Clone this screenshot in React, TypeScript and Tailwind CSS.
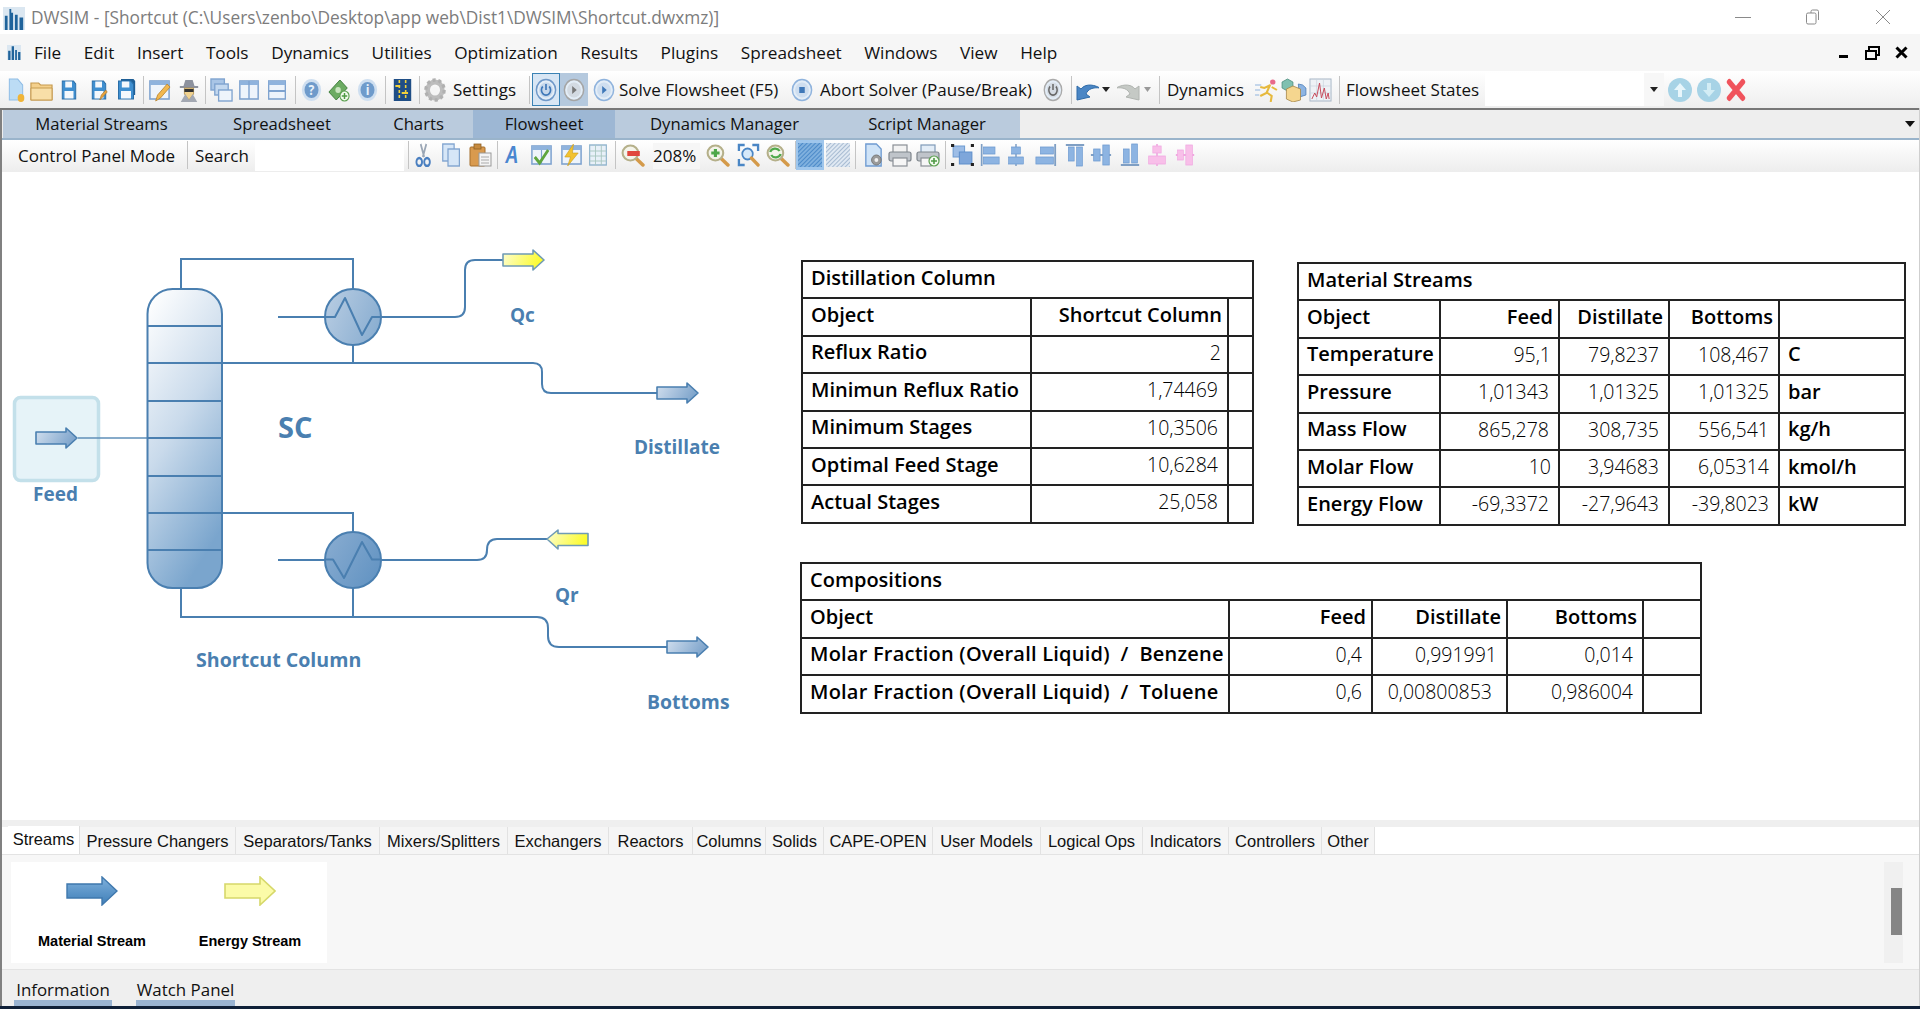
import React from "react";

const font = { fontFamily: '"Open Sans", "Noto Sans", sans-serif' };

function I({ w, h = 24, vb = "0 0 24 24", className = "", children }: { w: number; h?: number; vb?: string; className?: string; children: React.ReactNode }) {
  return (
    <svg width={w} height={h} viewBox={vb} preserveAspectRatio="none" className={"shrink-0 " + className}>
      {children}
    </svg>
  );
}

function Sep({ className = "" }: { className?: string }) {
  return <div className={"w-px h-[28px] bg-[#c4c4c4] shrink-0 " + className} />;
}

function T({ className = "", children }: { className?: string; children: React.ReactNode }) {
  return <div className={"shrink-0 whitespace-nowrap text-[17px] text-[#111] " + className}>{children}</div>;
}

const Ball = ({ c = "#7ea6cf", children }: { c?: string; children?: React.ReactNode }) => (
  <>
    <circle cx="12" cy="12" r="10.5" fill="#e3edf7" stroke={c} strokeWidth="1.6" />
    <circle cx="12" cy="12" r="7.5" fill={c} opacity="0.25" />
    {children}
  </>
);

const Win = ({ children }: { children?: React.ReactNode }) => (
  <>
    <rect x="2" y="3" width="20" height="18" fill="#eef4fb" stroke="#7fa3cf" strokeWidth="1.6" />
    <rect x="2" y="3" width="20" height="4" fill="#8fb3dd" />
    {children}
  </>
);

const Mag = ({ children }: { children?: React.ReactNode }) => (
  <>
    <line x1="15" y1="15" x2="22" y2="22" stroke="#d49a4a" strokeWidth="3.4" strokeLinecap="round" />
    <circle cx="10" cy="10" r="7.5" fill="#f4f4ea" stroke="#b5b08a" strokeWidth="2" />
    {children}
  </>
);

const Bar = ({ x, y, w, h, c = "#8db4e2" }: { x: number; y: number; w: number; h: number; c?: string }) => (
  <rect x={x} y={y} width={w} height={h} fill={c} stroke={c === "#8db4e2" ? "#6f9bd1" : "#f0a8e0"} strokeWidth="0.8" />
);

const Floppy = ({ pen }: { pen?: boolean }) => (
  <>
    <path d="M3 3h15l3 3v15H3z" fill="#3f8fd0" stroke="#2a6ea8" strokeWidth="1.2" />
    <rect x="7" y="3.5" width="9" height="6" fill="#f4f8fc" />
    <rect x="6" y="13" width="12" height="7.5" fill="#f4f8fc" />
    {pen && <path d="M13 22l2-5 6-5 2 2-6 5z" fill="#e8a33d" stroke="#9c6a20" strokeWidth="0.6" />}
  </>
);

function Row1() {
  return (
    <div className="flex items-center h-[37px] bg-gradient-to-b from-[#ffffff] to-[#eeeeee]">
      <I w={20} className="ml-[6px]">
        <path d="M4 1h10l6 6v15H4z" fill="#bcdcf5" stroke="#8fbde6" strokeWidth="1.2" />
        <circle cx="18" cy="20" r="4" fill="#f0b437" />
      </I>
      <I w={23} className="ml-[4px]">
        <path d="M1 5h8l2 2h12v15H1z" fill="#f4d08c" stroke="#c69a4f" strokeWidth="1.2" />
        <path d="M1 10h22v12H1z" fill="#f8dfa8" stroke="#c69a4f" strokeWidth="1" />
      </I>
      <I w={18} className="ml-[7px]"><Floppy /></I>
      <I w={18} className="ml-[12px]"><Floppy pen /></I>
      <I w={20} className="ml-[8px]">
        <path d="M6 1h15l2 2v14H6z" fill="#1f5f96" />
        <Floppy />
      </I>
      <Sep className="ml-[7px]" />
      <I w={23} className="ml-[4px]">
        <Win />
        <path d="M8 23l2-6 10-11 3 3-10 11z" fill="#f2b84f" stroke="#b5802c" strokeWidth="0.8" />
      </I>
      <I w={22} className="ml-[7px]">
        <path d="M6 8l2-6h8l2 6h4v2H2V8z" fill="#8d929e" />
        <path d="M7 10h10v6l-5 6-5-6z" fill="#f1d28f" stroke="#a88742" strokeWidth="0.8" />
        <rect x="7" y="11" width="10" height="3" fill="#333" />
        <path d="M3 24l5-8 4 6 4-6 5 8z" fill="#a3a8b2" />
      </I>
      <Sep className="ml-[5px]" />
      <I w={23} className="ml-[4px]">
        <rect x="1" y="1" width="14" height="11" fill="#a9c5e6" stroke="#7fa3cf" strokeWidth="1.4" />
        <rect x="5" y="6" width="14" height="11" fill="#c3d8ef" stroke="#7fa3cf" strokeWidth="1.4" />
        <rect x="9" y="12" width="14" height="11" fill="#eef4fb" stroke="#7fa3cf" strokeWidth="1.4" />
      </I>
      <I w={22} className="ml-[5px]">
        <Win />
        <line x1="12" y1="3" x2="12" y2="21" stroke="#7fa3cf" strokeWidth="1.6" />
      </I>
      <I w={20} className="ml-[7px]">
        <Win />
        <line x1="2" y1="13" x2="22" y2="13" stroke="#7fa3cf" strokeWidth="2" />
      </I>
      <Sep className="ml-[8px]" />
      <I w={21} className="ml-[5px]">
        <circle cx="12" cy="12" r="11" fill="#cfdff0" />
        <circle cx="12" cy="12" r="8" fill="#6f9bcb" />
        <text x="12" y="17" textAnchor="middle" fontSize="14" fontWeight="700" fill="#e8f1fa">?</text>
      </I>
      <I w={22} className="ml-[6px]">
        <path d="M1 14L13 2l8 8-12 12z" fill="#6cab62" stroke="#3f7d3c" strokeWidth="1" />
        <circle cx="11" cy="12" r="3" fill="#c9e4bf" />
        <circle cx="18" cy="18" r="5" fill="#f3fbef" stroke="#5ba04f" strokeWidth="1.2" />
        <path d="M18 15v6M15 18h6" stroke="#4f9a45" strokeWidth="1.6" />
      </I>
      <I w={21} className="ml-[7px]">
        <circle cx="12" cy="12" r="11" fill="#cfdff0" />
        <circle cx="12" cy="12" r="8" fill="#6f9bcb" />
        <text x="12" y="17" textAnchor="middle" fontSize="14" fontWeight="700" fill="#e8f1fa">i</text>
      </I>
      <Sep className="ml-[7px]" />
      <I w={19} className="ml-[7px]">
        <rect x="1" y="1" width="22" height="22" fill="#1f4e86" />
        <path d="M8 2v20M16 2v20" stroke="#f2d23c" strokeWidth="2" strokeDasharray="3 2" />
        <path d="M3 8h6M11 15h8" stroke="#f2d23c" strokeWidth="2" />
      </I>
      <Sep className="ml-[7px]" />
      <I w={22} className="ml-[4px]">
        <circle cx="12" cy="12" r="8" fill="none" stroke="#bdbdbd" strokeWidth="5" />
        <circle cx="12" cy="12" r="10" fill="none" stroke="#b0b0b0" strokeWidth="3.5" strokeDasharray="3.4 2.9" />
        <circle cx="12" cy="12" r="3" fill="#f5f5f5" />
      </I>
      <T className="ml-[7px] w-[66px]">Settings</T>
      <Sep className="ml-[10px]" />
      <div className="ml-[2px] w-[28px] h-[33px] shrink-0 flex items-center justify-center bg-[#d8e6f4] border border-[#3b82b4]">
        <I w={22}>
          <Ball c="#6f98c8">
            <path d="M8.5 8.5a5 5 0 1 0 7 0M12 6v6" fill="none" stroke="#3f78b8" strokeWidth="1.8" />
          </Ball>
        </I>
      </div>
      <div className="w-[28px] h-[33px] shrink-0 flex items-center justify-center bg-[#b5c9de]">
        <I w={22}>
          <Ball c="#a5a5a5"><path d="M10 8l5 4-5 4z" fill="#777" /></Ball>
        </I>
      </div>
      <div className="ml-[2px] w-[28px] shrink-0 flex items-center justify-center">
        <I w={22}>
          <Ball c="#8fb3dd"><path d="M10 8l5 4-5 4z" fill="#3f78b8" /></Ball>
        </I>
      </div>
      <T className="ml-[1px] w-[162px]">Solve Flowsheet (F5)</T>
      <I w={22} className="ml-[10px]">
        <Ball c="#8fb3dd"><rect x="9" y="9" width="6" height="6" fill="#3f78b8" /></Ball>
      </I>
      <T className="ml-[7px] w-[212px]">Abort Solver (Pause/Break)</T>
      <I w={20} className="ml-[11px]">
        <Ball c="#aaaaaa">
          <path d="M8.5 8.5a5 5 0 1 0 7 0M12 6v6" fill="none" stroke="#666" strokeWidth="1.8" />
        </Ball>
      </I>
      <Sep className="ml-[8px]" />
      <I w={24} className="ml-[3px]">
        <path d="M2 22V8l4 3c3-4 10-6 19-1-7-1-12 1-14 6l4 3z" fill="#4a86c5" stroke="#2f6ba8" strokeWidth="1" />
      </I>
      <I w={8} h={5} vb="0 0 8 5" className="ml-[3px]"><path d="M0 0h8L4 5z" fill="#222" /></I>
      <I w={24} className="ml-[7px]">
        <path d="M22 22V8l-4 3C15 7 8 5-1 10c7-1 12 1 14 6l-4 3z" fill="#c5c9c5" stroke="#b0b4b0" strokeWidth="1" />
      </I>
      <I w={7} h={5} vb="0 0 8 5" className="ml-[3px]"><path d="M0 0h8L4 5z" fill="#999" /></I>
      <Sep className="ml-[8px]" />
      <T className="ml-[7px] w-[78px]">Dynamics</T>
      <I w={25} className="ml-[9px]">
        <circle cx="18" cy="4" r="2.6" fill="#e86a8a" />
        <path d="M16 7l-6 3-4-1M15 8l-3 7-6 3M13 15l4 3-1 6M17 9l5 3" fill="none" stroke="#e6b93d" strokeWidth="2" />
        <path d="M1 7h6M1 12h5M1 17h4" stroke="#8fb3dd" strokeWidth="1.2" />
      </I>
      <I w={26} className="ml-[2px]">
        <path d="M1 4l5-3 5 3v6l-5 3-5-3z" fill="#7fc0b0" stroke="#4e8f80" strokeWidth="0.8" />
        <path d="M16 6l4 1 3 3v7l-6 2z" fill="#8db4e2" stroke="#4f7fb8" strokeWidth="0.8" />
        <path d="M5 11l6-3 7 3v11l-7 2-6-3z" fill="#f5d68f" stroke="#a8894a" strokeWidth="0.8" />
      </I>
      <I w={23} className="ml-[2px]">
        <rect x="1" y="1" width="22" height="22" fill="#eef2f6" stroke="#a8b6c6" strokeWidth="1" />
        <path d="M1 8h22M1 15h22M8 1v22M15 1v22" stroke="#c9d3de" strokeWidth="0.7" />
        <path d="M3 21l3-6 2 4 3-14 2 15 3-10 2 11 2-6 1 6" fill="none" stroke="#c74a5a" strokeWidth="1" />
      </I>
      <Sep className="ml-[7px]" />
      <T className="ml-[6px] w-[132px]">Flowsheet States</T>
      <div className="ml-[7px] w-[159px] h-[33px] bg-white shrink-0" />
      <div className="w-[20px] h-[33px] bg-[#f7f7f7] shrink-0 flex items-center justify-center">
        <I w={8} h={5} vb="0 0 8 5"><path d="M0 0h8L4 5z" fill="#222" /></I>
      </div>
      <I w={24} className="ml-[4px]">
        <circle cx="12" cy="12" r="12" fill="#a7d3e6" />
        <path d="M12 5l6 7h-4v7h-4v-7H6z" fill="#e8f6fb" />
      </I>
      <I w={24} className="ml-[5px]">
        <circle cx="12" cy="12" r="12" fill="#a7d3e6" />
        <path d="M12 19l6-7h-4V5h-4v7H6z" fill="#d3edf5" />
      </I>
      <I w={20} className="ml-[5px]">
        <path d="M4 4l16 16M20 4L4 20" stroke="#f0535c" strokeWidth="6" strokeLinecap="round" />
      </I>
    </div>
  );
}

function Row2() {
  return (
    <div className="flex items-center h-[32px] pb-[2px] bg-gradient-to-b from-[#ffffff] to-[#ededed]">
      <T className="ml-[18px] mt-[2px] w-[160px]">Control Panel Mode</T>
      <Sep className="ml-[9px]" />
      <T className="ml-[7px] mt-[2px] w-[55px]">Search</T>
      <div className="ml-[5px] mt-[2px] w-[149px] h-[30px] bg-white shrink-0" />
      <Sep className="ml-[4px]" />
      <I w={17} className="ml-[6px]">
        <path d="M8 1l5 13M16 1l-5 13" stroke="#9aa6b5" strokeWidth="2.4" />
        <circle cx="6" cy="19" r="4" fill="none" stroke="#4a7fc0" strokeWidth="2.6" />
        <circle cx="17" cy="19" r="4" fill="none" stroke="#4a7fc0" strokeWidth="2.6" />
      </I>
      <I w={21} className="ml-[9px]">
        <rect x="2" y="1" width="13" height="17" fill="#d6e6f7" stroke="#7fa3cf" strokeWidth="1.4" />
        <rect x="8" y="6" width="13" height="17" fill="#d6e6f7" stroke="#7fa3cf" strokeWidth="1.4" />
      </I>
      <I w={24} className="ml-[6px]">
        <rect x="2" y="4" width="15" height="19" rx="1" fill="#d99a4e" stroke="#a56f2c" strokeWidth="1" />
        <rect x="6" y="1" width="7" height="5" fill="#c68a3f" stroke="#8d5f25" strokeWidth="0.8" />
        <rect x="11" y="10" width="12" height="13" fill="#f4f4f4" stroke="#9a9a9a" strokeWidth="1" />
        <path d="M13 14h8M13 17h8M13 20h8" stroke="#aaa" strokeWidth="1" />
      </I>
      <Sep className="ml-[5px]" />
      <I w={19} className="ml-[5px] overflow-visible">
        <text x="11" y="20" textAnchor="middle" fontSize="23" fontWeight="700" fontStyle="italic" fontFamily="Liberation Sans, sans-serif" fill="#4a86d0">A</text>
      </I>
      <I w={23} className="ml-[8px]">
        <Win>
          <path d="M12 7v14" stroke="#7fa3cf" strokeWidth="1.2" />
        </Win>
        <path d="M5 14l5 6 9-13" fill="none" stroke="#5ea53e" strokeWidth="3" />
      </I>
      <I w={23} className="ml-[7px]">
        <Win />
        <path d="M14 1L5 14h6l-3 9 11-13h-6z" fill="#f2c230" stroke="#c99a1a" strokeWidth="0.6" />
      </I>
      <I w={20} className="ml-[5px]">
        <rect x="2" y="2" width="20" height="20" fill="#e8f0f8" stroke="#8fb3cc" strokeWidth="1.4" />
        <path d="M2 8h20M2 13h20M2 18h20M9 2v20M16 2v20" stroke="#a9c6c0" strokeWidth="1" />
      </I>
      <Sep className="ml-[7px]" />
      <I w={25} className="ml-[4px]">
        <Mag><rect x="7" y="8" width="12" height="5" fill="#e0463c" /></Mag>
      </I>
      <T className="ml-[8px] mt-[2px] w-[47px] bg-[#f6f6f6]">208%</T>
      <I w={25} className="ml-[5px]">
        <Mag><path d="M6 10h8M10 6v8" stroke="#4fa84a" strokeWidth="3" /></Mag>
      </I>
      <I w={23} className="ml-[7px]">
        <path d="M2 8V2h6M16 2h6v6M2 16v6h6" fill="none" stroke="#4a86c5" strokeWidth="2.4" />
        <circle cx="11" cy="11" r="5.5" fill="#d6e9fa" stroke="#4a86c5" strokeWidth="1.8" />
        <line x1="15" y1="15" x2="22" y2="22" stroke="#d49a4a" strokeWidth="3.4" strokeLinecap="round" />
      </I>
      <I w={25} className="ml-[5px]">
        <Mag><path d="M5 9a5 5 0 0 1 9-1M15 11a5 5 0 0 1-9 1" fill="none" stroke="#4fa84a" strokeWidth="2.2" /></Mag>
      </I>
      <Sep className="ml-[5px]" />
      <div className="w-[28px] h-[30px] shrink-0 flex items-center justify-center bg-[#9fc6ec]">
        <I w={24} h={24}>
          <defs>
            <pattern id="h1" width="3" height="3" patternUnits="userSpaceOnUse" patternTransform="rotate(45)">
              <rect width="3" height="3" fill="#7fb0de" />
              <line x1="0" y1="0" x2="0" y2="3" stroke="#3f80c4" strokeWidth="1.6" />
            </pattern>
            <pattern id="h2" width="3" height="3" patternUnits="userSpaceOnUse" patternTransform="rotate(45)">
              <rect width="3" height="3" fill="#dfe8f2" />
              <line x1="0" y1="0" x2="0" y2="3" stroke="#8fa8c4" strokeWidth="1.4" />
            </pattern>
          </defs>
          <rect width="24" height="24" fill="url(#h1)" />
        </I>
      </div>
      <I w={24} className="ml-[2px]"><rect width="24" height="24" fill="url(#h2)" /></I>
      <Sep className="ml-[5px]" />
      <I w={23} className="ml-[6px]">
        <path d="M4 1h11l5 5v17H4z" fill="#cfe3f7" stroke="#6f9bd1" strokeWidth="1.4" />
        <circle cx="15" cy="17" r="5" fill="#9a9a9a" stroke="#777" strokeWidth="1" />
        <circle cx="15" cy="17" r="2" fill="#eee" />
      </I>
      <I w={24} className="ml-[3px]">
        <rect x="5" y="2" width="14" height="8" fill="#f3f3f3" stroke="#8a8f96" strokeWidth="1.2" />
        <rect x="1" y="9" width="22" height="9" rx="2" fill="#bfc4ca" stroke="#7f858c" strokeWidth="1.2" />
        <rect x="5" y="15" width="14" height="8" fill="#f6f6f6" stroke="#8a8f96" strokeWidth="1.2" />
      </I>
      <I w={24} className="ml-[4px]">
        <rect x="5" y="2" width="14" height="8" fill="#e3edf7" stroke="#7f9ab8" strokeWidth="1.2" />
        <rect x="1" y="9" width="22" height="9" rx="2" fill="#bfc4ca" stroke="#7f858c" strokeWidth="1.2" />
        <rect x="5" y="15" width="10" height="8" fill="#f6f6f6" stroke="#8a8f96" strokeWidth="1.2" />
        <circle cx="18" cy="18" r="5" fill="#f3fbef" stroke="#5ba04f" strokeWidth="1.2" />
        <path d="M18 15v6M15 18h6" stroke="#4f9a45" strokeWidth="1.6" />
      </I>
      <Sep className="ml-[5px]" />
      <I w={25} className="ml-[4px]">
        <rect x="3" y="3" width="11" height="11" fill="#9dbde6" stroke="#6f9bd1" strokeWidth="1" />
        <rect x="9" y="9" width="12" height="12" fill="#7ea6da" stroke="#5f8fcb" strokeWidth="1" />
        <path d="M1 1h3v3H1zM20 1h3v3h-3zM1 20h3v3H1zM20 20h3v3h-3z" fill="#222" />
      </I>
      <I w={20} className="ml-[5px]">
        <path d="M2 1v22" stroke="#7f9fc4" strokeWidth="2" />
        <Bar x={4} y={4} w={14} h={7} />
        <Bar x={4} y={14} w={19} h={7} />
      </I>
      <I w={18} className="ml-[7px]">
        <path d="M12 1v22" stroke="#7f9fc4" strokeWidth="2" />
        <Bar x={6} y={4} w={12} h={7} />
        <Bar x={2} y={14} w={20} h={7} />
      </I>
      <I w={22} className="ml-[10px]">
        <path d="M22 1v22" stroke="#7f9fc4" strokeWidth="2" />
        <Bar x={6} y={4} w={14} h={7} />
        <Bar x={1} y={14} w={19} h={7} />
      </I>
      <I w={20} className="ml-[8px]">
        <path d="M1 2h22" stroke="#7f9fc4" strokeWidth="2" />
        <Bar x={4} y={4} w={7} h={14} />
        <Bar x={14} y={4} w={7} h={19} />
      </I>
      <I w={22} className="ml-[5px]">
        <path d="M1 12h22" stroke="#7f9fc4" strokeWidth="2" />
        <Bar x={4} y={6} w={7} h={12} />
        <Bar x={14} y={2} w={7} h={20} />
      </I>
      <I w={20} className="ml-[8px]">
        <path d="M1 22h22" stroke="#7f9fc4" strokeWidth="2" />
        <Bar x={4} y={6} w={7} h={14} />
        <Bar x={14} y={1} w={7} h={19} />
      </I>
      <I w={20} className="ml-[7px]">
        <path d="M12 1v22" stroke="#f0a8e0" strokeWidth="2" />
        <Bar x={7} y={3} w={10} h={7} c="#f8bfe9" />
        <Bar x={2} y={13} w={20} h={8} c="#f8bfe9" />
      </I>
      <I w={20} className="ml-[8px]">
        <path d="M1 12h22" stroke="#f0a8e0" strokeWidth="2" />
        <Bar x={3} y={7} w={7} h={10} c="#f8bfe9" />
        <Bar x={13} y={2} w={8} h={20} c="#f8bfe9" />
      </I>
    </div>
  );
}

function Arrow({ x, y, kind, left }: { x: number; y: number; kind: "m" | "e"; left?: boolean }) {
  const d = left
    ? `M${x} ${y}l11 -9v3.5h30v12h-30v3.5z`
    : `M${x} ${y - 6}h30v-4l11 10l-11 10v-4h-30z`;
  return <path d={d} fill={kind === "m" ? "url(#gm)" : "url(#ge)"} stroke={kind === "m" ? "#4a7fb0" : "#6f9bb5"} strokeWidth="1.6" strokeLinejoin="round" />;
}

function Diagram() {
  const s = "#4a7fb0";
  const labelCls = { fontFamily: '"Open Sans", sans-serif', fontWeight: 700, fill: "#4a7fb0" } as const;
  const stages = [326, 363, 401, 438, 476, 513, 550];
  return (
    <svg width={760} height={560} viewBox="0 172 760 560" className="absolute left-0 top-0">
      <defs>
        <linearGradient id="gc" x1="0.1" y1="0" x2="0.5" y2="1">
          <stop offset="0" stopColor="#ffffff" />
          <stop offset="0.5" stopColor="#c9daeb" />
          <stop offset="1" stopColor="#7aa5cd" />
        </linearGradient>
        <linearGradient id="ga" x1="0" y1="0.2" x2="1" y2="0.6">
          <stop offset="0" stopColor="#b7cce2" />
          <stop offset="1" stopColor="#8aaed1" />
        </linearGradient>
        <linearGradient id="gb" x1="0" y1="0.2" x2="1" y2="0.8">
          <stop offset="0" stopColor="#87abd0" />
          <stop offset="1" stopColor="#6293c2" />
        </linearGradient>
        <linearGradient id="gm" x1="0" y1="0" x2="1" y2="0.3">
          <stop offset="0" stopColor="#d3e0ef" />
          <stop offset="1" stopColor="#7fa5cc" />
        </linearGradient>
        <linearGradient id="ge" x1="0" y1="0" x2="1" y2="0.2">
          <stop offset="0" stopColor="#fdfdd0" />
          <stop offset="1" stopColor="#fbfb2e" />
        </linearGradient>
      </defs>
      <rect x="14.5" y="397.5" width="84" height="83" rx="6" fill="#e6f3f8" stroke="#c3e0ea" strokeWidth="3.5" />
      <g fill="none" stroke={s} strokeWidth="2">
        <path d="M181 289V259H353V289" />
        <path d="M353 345V363M222 363H533Q542 363 542 372V384Q542 393 551 393H657" />
        <path d="M278 317H325M381 317H455Q465 317 465 307V270Q465 260 475 260H503" />
        <path d="M222 513H353V532M278 560H325M381 560H477Q487 560 487 550Q487 539 497 539H547" />
        <path d="M353 588V617M181 588V617H537Q548 617 548 628V636Q548 647 559 647H667" />
      </g>
      <path d="M78 438H147" stroke="#5f8fb8" strokeWidth="1.6" />
      <rect x="147.5" y="289" width="74.5" height="299" rx="25" fill="url(#gc)" stroke={s} strokeWidth="2" />
      {stages.map((y) => (
        <line key={y} x1="147.5" y1={y} x2="222" y2={y} stroke={s} strokeWidth="1.8" />
      ))}
      <circle cx="353" cy="317" r="28" fill="url(#ga)" stroke={s} strokeWidth="2" />
      <path d="M325 317H335L345 298L362 335L372 317H381" fill="none" stroke={s} strokeWidth="2" strokeLinejoin="round" />
      <circle cx="353" cy="560" r="28" fill="url(#gb)" stroke={s} strokeWidth="2" />
      <path d="M325 559.5H333L344 578L362 542L372 559.5H381" fill="none" stroke={s} strokeWidth="2" strokeLinejoin="round" />
      <Arrow x={36} y={438} kind="m" />
      <Arrow x={503} y={260} kind="e" />
      <Arrow x={657} y={393} kind="m" />
      <Arrow x={547} y={539} kind="e" left />
      <Arrow x={667} y={647} kind="m" />
      <g style={labelCls}>
        <text x="33" y="501" fontSize="19">Feed</text>
        <text x="278" y="438" fontSize="29">SC</text>
        <text x="510" y="322" fontSize="19">Qc</text>
        <text x="634" y="454" fontSize="19">Distillate</text>
        <text x="555" y="602" fontSize="19">Qr</text>
        <text x="196" y="667" fontSize="19.6">Shortcut Column</text>
        <text x="647" y="709" fontSize="19.4">Bottoms</text>
      </g>
    </svg>
  );
}

type Cell = { t: string; pr?: string; bold?: boolean; left?: boolean };

function DataTable({ className, title, cols, rows }: { className: string; title: string; cols: number[]; rows: Cell[][] }) {
  return (
    <table className={"absolute table-fixed border-collapse bg-white text-black text-[20px] leading-none " + className}>
      <colgroup>
        {cols.map((c, i) => (
          <col key={i} style={{ width: c }} />
        ))}
      </colgroup>
      <tbody>
        <tr className="h-[37.4px]">
          <td colSpan={cols.length} className="border-2 border-[#222] px-[8px] pt-0 pb-[3px] font-semibold whitespace-nowrap">
            {title}
          </td>
        </tr>
        {rows.map((r, i) => (
          <tr key={i} className="h-[37.4px]">
            {r.map((c, j) => (
              <td
                key={j}
                className={
                  "border-2 border-[#222] pt-0 pb-[4px] whitespace-pre overflow-hidden " +
                  (c.left ? "text-left pl-[8px] pr-0 " : "text-right pl-0 ") +
                  (c.bold ? "font-semibold " : "font-light text-[19.5px] ") +
                  (c.pr ?? "")
                }
              >
                {c.t}
              </td>
            ))}
          </tr>
        ))}
      </tbody>
    </table>
  );
}

const L = (t: string): Cell => ({ t, left: true, bold: true });
const LW = (t: string): Cell => ({ t, left: true, bold: true, pr: "tracking-[0.22px]" });
const H = (t: string): Cell => ({ t, bold: true, pr: "pr-[5px]" });
const N = (t: string): Cell => ({ t, pr: "pr-[9px]" });
const E: Cell = { t: "", left: true };

const Tabs = [
  ["w-[197px]", "Material Streams", false],
  ["w-[164px]", "Spreadsheet", false],
  ["w-[109px]", "Charts", false],
  ["w-[142px]", "Flowsheet", true],
  ["w-[219px]", "Dynamics Manager", false],
  ["w-[186px]", "Script Manager", false],
] as const;

const Palette: [string, string][] = [
  ["Pressure Changers", "w-[156px]"],
  ["Separators/Tanks", "w-[144px]"],
  ["Mixers/Splitters", "w-[128px]"],
  ["Exchangers", "w-[101px]"],
  ["Reactors", "w-[84px]"],
  ["Columns", "w-[73px]"],
  ["Solids", "w-[58px]"],
  ["CAPE-OPEN", "w-[109px]"],
  ["User Models", "w-[108px]"],
  ["Logical Ops", "w-[102px]"],
  ["Indicators", "w-[86px]"],
  ["Controllers", "w-[93px]"],
  ["Other", "w-[53px]"],
];

const arial = { fontFamily: '"Liberation Sans", Arial, sans-serif' };

export default function App() {
  return (
    <div style={font} className="relative w-[1920px] h-[1009px] overflow-hidden bg-white flex flex-col">
      {/* Title bar */}
      <div className="h-[34px] shrink-0 flex items-center bg-white">
        <I w={22} h={23} className="ml-[3px] mt-[2px]">
          <rect x="0" y="0" width="24" height="24" fill="#dbe7f1" />
          <path d="M2 24V9h3v15zM7 24V2h2v4h2v18zM13 24V8h3v16zM18 24V11h4v13z" fill="#1f639b" />
        </I>
        <div className="ml-[6px] mt-[2px] text-[17.3px] text-[#7c7c7c] whitespace-nowrap">
          DWSIM - [Shortcut (C:\Users\zenbo\Desktop\app web\Dist1\DWSIM\Shortcut.dwxmz)]
        </div>
        <div className="ml-auto flex items-center">
          <div className="w-[16px] h-px bg-[#8a8a8a]" />
          <I w={16} h={16} vb="0 0 16 16" className="ml-[54px]">
            <rect x="1.5" y="4" width="9.5" height="11" rx="1.5" fill="none" stroke="#8a8a8a" strokeWidth="1" />
            <path d="M4 4V2.5A1.5 1.5 0 0 1 5.5 1H10a1.5 1.5 0 0 1 1.5 1.5V11" fill="none" stroke="#8a8a8a" strokeWidth="1" transform="translate(2 0)" />
          </I>
          <I w={16} h={16} vb="0 0 16 16" className="ml-[54px] mr-[29px]">
            <path d="M1 1l14 14M15 1L1 15" stroke="#8a8a8a" strokeWidth="1" />
          </I>
        </div>
      </div>

      {/* Menu bar */}
      <div className="h-[37px] shrink-0 flex items-center bg-[#f6f6f6]">
        <I w={14} h={15} className="ml-[7px]">
          <rect x="0" y="0" width="24" height="24" fill="#dbe7f1" />
          <path d="M2 24V9h4v15zM8 24V2h4v22zM14 24V8h3v16zM19 24V11h4v13z" fill="#1f639b" />
        </I>
        <div className="ml-[13px] flex items-center gap-[22.6px] text-[17.2px] text-[#111]">
          {["File", "Edit", "Insert", "Tools", "Dynamics", "Utilities", "Optimization", "Results", "Plugins", "Spreadsheet", "Windows", "View", "Help"].map((m) => (
            <span key={m} className="whitespace-nowrap">{m}</span>
          ))}
        </div>
        <div className="ml-auto flex items-center">
          <div className="w-[9px] h-[3px] mt-[8px] bg-black" />
          <I w={15} h={14} vb="0 0 15 14" className="ml-[17px]">
            <rect x="4" y="1" width="10" height="8" fill="none" stroke="#000" strokeWidth="2" />
            <rect x="1" y="5" width="10" height="8" fill="#f6f6f6" stroke="#000" strokeWidth="2" />
          </I>
          <I w={13} h={13} vb="0 0 13 13" className="ml-[15px] mr-[12px]">
            <path d="M1.5 1.5l10 10M11.5 1.5l-10 10" stroke="#000" strokeWidth="3" />
          </I>
        </div>
      </div>

      <div className="shrink-0"><Row1 /></div>
      <div className="h-[2px] shrink-0 bg-[#777777]" />

      {/* Document tabs */}
      <div className="h-[28px] shrink-0 flex items-stretch pl-[3px] bg-[#eeeeee]">
        {Tabs.map(([w, label, active]) => (
          <div key={label} className={w + " flex items-center justify-center text-[16.7px] text-[#111] whitespace-nowrap " + (active ? "bg-[#9db7d4]" : "bg-[#bacbdd]")}>
            {label}
          </div>
        ))}
        <I w={10} h={6} vb="0 0 10 6" className="ml-auto mr-[5px] self-center">
          <path d="M0 0h10L5 6z" fill="#111" />
        </I>
      </div>
      <div className="h-[2px] shrink-0 bg-[#9ab4cb]" />
      <div className="shrink-0"><Row2 /></div>

      {/* Canvas */}
      <div className="relative h-[648px] shrink-0 bg-white">
        <Diagram />
        <DataTable
          className="left-[801px] top-[88px] w-[451px]"
          title="Distillation Column"
          cols={[229, 197, 25]}
          rows={[
            [L("Object"), H("Shortcut Column"), E],
            [L("Reflux Ratio"), { t: "2", pr: "pr-[6px]" }, E],
            [L("Minimun Reflux Ratio"), N("1,74469"), E],
            [L("Minimum Stages"), N("10,3506"), E],
            [L("Optimal Feed Stage"), N("10,6284"), E],
            [L("Actual Stages"), N("25,058"), E],
          ]}
        />
        <DataTable
          className="left-[1297px] top-[90px] w-[607px]"
          title="Material Streams"
          cols={[142, 119, 110, 110, 126]}
          rows={[
            [L("Object"), H("Feed"), H("Distillate"), H("Bottoms"), E],
            [L("Temperature"), { t: "95,1", pr: "pr-[7px]" }, N("79,8237"), N("108,467"), L("C")],
            [L("Pressure"), N("1,01343"), N("1,01325"), N("1,01325"), L("bar")],
            [L("Mass Flow"), N("865,278"), N("308,735"), N("556,541"), L("kg/h")],
            [L("Molar Flow"), { t: "10", pr: "pr-[7px]" }, N("3,94683"), N("6,05314"), L("kmol/h")],
            [L("Energy Flow"), N("-69,3372"), N("-27,9643"), N("-39,8023"), L("kW")],
          ]}
        />
        <DataTable
          className="left-[800px] top-[390px] w-[900px]"
          title="Compositions"
          cols={[428, 143, 135, 136, 58]}
          rows={[
            [L("Object"), H("Feed"), H("Distillate"), H("Bottoms"), E],
            [LW("Molar Fraction (Overall Liquid)  /  Benzene"), N("0,4"), N("0,991991"), N("0,014"), E],
            [LW("Molar Fraction (Overall Liquid)  /  Toluene"), N("0,6"), { t: "0,00800853", pr: "pr-[14px]" }, N("0,986004"), E],
          ]}
        />
      </div>

      {/* Palette */}
      <div className="h-[7px] shrink-0 bg-[#efefef]" />
      <div style={arial} className="h-[27px] shrink-0 flex items-stretch pl-[8px] text-[16.5px] text-[#111] bg-white">
        <div className="w-[72px] -mt-[1px] pb-[2px] flex items-center justify-center border-r border-[#dddddd] bg-white">Streams</div>
        {Palette.map(([label, w]) => (
          <div key={label} className={w + " pt-[2px] flex items-center justify-center whitespace-nowrap bg-[#f5f5f5] border-r border-[#e2e2e2]"}>
            {label}
          </div>
        ))}
      </div>
      <div className="h-[116px] shrink-0 flex items-center bg-[#f7f7f7] border-t border-b border-[#e3e3e3] pl-[11px]">
        <div style={arial} className="w-[316px] h-[101px] bg-white flex items-start text-[14.5px] font-bold text-black">
          <div className="w-[162px] flex flex-col items-center pt-[14px]">
            <I w={52} h={30} vb="0 0 52 30">
              <defs>
                <linearGradient id="pm" x1="0" y1="0" x2="0" y2="1">
                  <stop offset="0" stopColor="#7fb0dc" />
                  <stop offset="1" stopColor="#3f7fb8" />
                </linearGradient>
              </defs>
              <path d="M1 8h35V1l15 14-15 14v-7H1z" fill="url(#pm)" stroke="#3f78ad" strokeWidth="1.4" />
            </I>
            <div className="mt-[25px] whitespace-nowrap">Material Stream</div>
          </div>
          <div className="w-[154px] flex flex-col items-center pt-[14px]">
            <I w={52} h={30} vb="0 0 52 30">
              <path d="M1 8h35V1l15 14-15 14v-7H1z" fill="#fbfba8" stroke="#d6d86a" strokeWidth="1.6" />
            </I>
            <div className="mt-[25px] whitespace-nowrap">Energy Stream</div>
          </div>
        </div>
        <div className="ml-auto mr-[17px] w-[19px] h-[101px] bg-[#f0f0f0] flex justify-end items-start pt-[26px]">
          <div className="w-[11px] mr-px h-[47px] bg-[#858585]" />
        </div>
      </div>

      {/* Bottom tabs */}
      <div className="flex-1 flex items-stretch bg-[#efefef] text-[16.9px] text-[#111] pl-[14px]">
        <div className="w-[98px] flex flex-col items-center justify-end">
          <span className="leading-[20px] whitespace-nowrap">Information</span>
          <div className="w-full h-[6px] bg-[#9ab4d2]" />
        </div>
        <div className="ml-[24px] w-[99px] flex flex-col items-center justify-end">
          <span className="leading-[20px] whitespace-nowrap">Watch Panel</span>
          <div className="w-full h-[6px] bg-[#9ab4d2]" />
        </div>
      </div>
      <div className="h-[3px] shrink-0 bg-[#0f2038]" />

      {/* Window frame edges */}
      <div className="absolute left-0 top-[110px] bottom-[3px] w-[2px] bg-[#808080]" />
      <div className="absolute right-0 top-[108px] bottom-[3px] w-px bg-[#cfcfcf]" />
    </div>
  );
}
